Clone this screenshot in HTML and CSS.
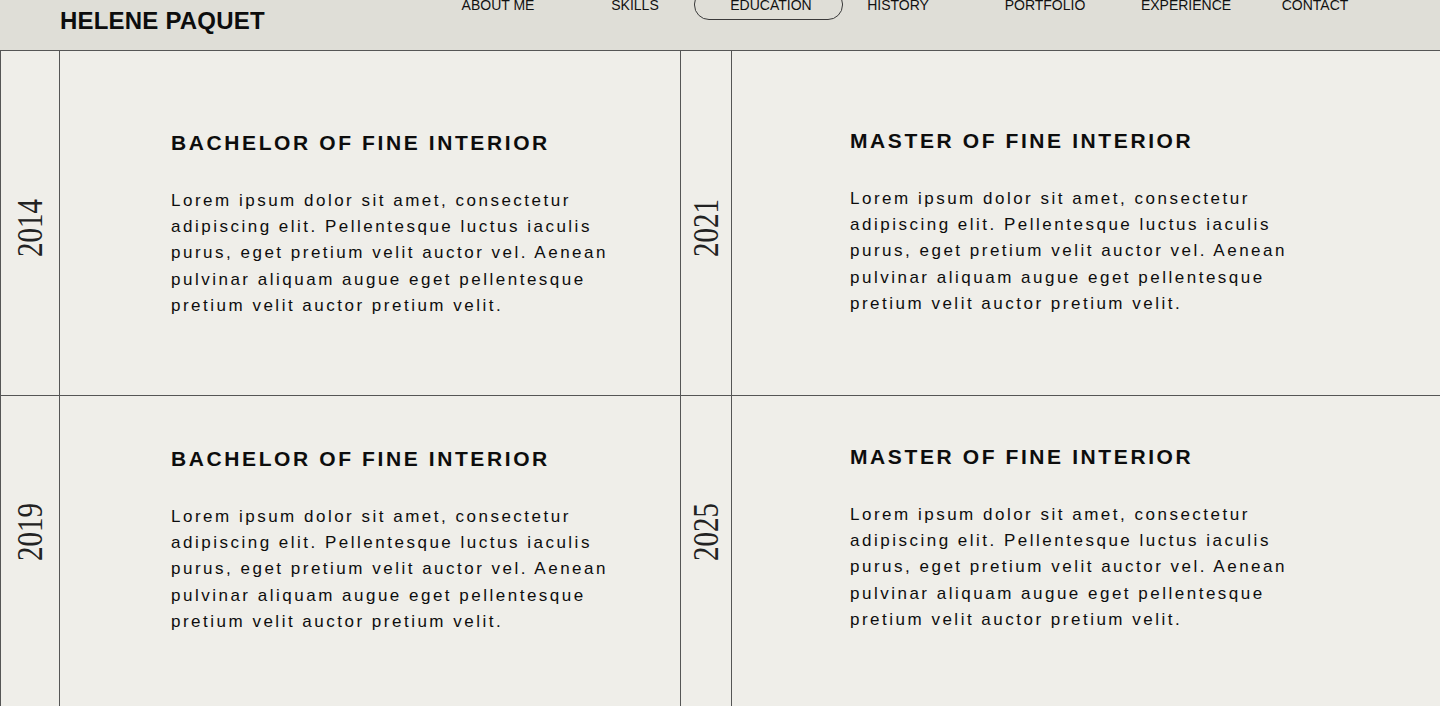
FILE: index.html
```html
<!DOCTYPE html>
<html lang="en">
<head>
<meta charset="utf-8">
<title>Helene Paquet — Education</title>
<link rel="stylesheet" href="styles.css">
</head>
<body>
<header class="topbar">
  <div class="brand">HELENE PAQUET</div>
  <nav class="nav">
    <a class="nav-item nav-item--about" href="#">ABOUT ME</a>
    <a class="nav-item nav-item--skills" href="#">SKILLS</a>
    <a class="nav-item nav-item--education is-active" href="#">EDUCATION</a>
    <a class="nav-item nav-item--history" href="#">HISTORY</a>
    <a class="nav-item nav-item--portfolio" href="#">PORTFOLIO</a>
    <a class="nav-item nav-item--experience" href="#">EXPERIENCE</a>
    <a class="nav-item nav-item--contact" href="#">CONTACT</a>
  </nav>
</header>
<main class="timeline">
  <div class="year year--top"><span class="year-text">2014</span></div>
  <section class="entry entry--top">
    <h2 class="entry-title">BACHELOR OF FINE INTERIOR</h2>
    <p class="entry-text">Lorem ipsum dolor sit amet, consectetur adipiscing elit. Pellentesque luctus iaculis purus, eget pretium velit auctor vel. Aenean pulvinar aliquam augue eget pellentesque pretium velit auctor pretium velit.</p>
  </section>
  <div class="year year--top"><span class="year-text">2021</span></div>
  <section class="entry entry--top entry--right">
    <h2 class="entry-title">MASTER OF FINE INTERIOR</h2>
    <p class="entry-text">Lorem ipsum dolor sit amet, consectetur adipiscing elit. Pellentesque luctus iaculis purus, eget pretium velit auctor vel. Aenean pulvinar aliquam augue eget pellentesque pretium velit auctor pretium velit.</p>
  </section>

  <div class="year year--bottom"><span class="year-text">2019</span></div>
  <section class="entry entry--bottom">
    <h2 class="entry-title">BACHELOR OF FINE INTERIOR</h2>
    <p class="entry-text">Lorem ipsum dolor sit amet, consectetur adipiscing elit. Pellentesque luctus iaculis purus, eget pretium velit auctor vel. Aenean pulvinar aliquam augue eget pellentesque pretium velit auctor pretium velit.</p>
  </section>
  <div class="year year--bottom"><span class="year-text">2025</span></div>
  <section class="entry entry--bottom entry--right">
    <h2 class="entry-title">MASTER OF FINE INTERIOR</h2>
    <p class="entry-text">Lorem ipsum dolor sit amet, consectetur adipiscing elit. Pellentesque luctus iaculis purus, eget pretium velit auctor vel. Aenean pulvinar aliquam augue eget pellentesque pretium velit auctor pretium velit.</p>
  </section>
</main>
</body>
</html>
```
FILE: styles.css
```css
* { box-sizing: border-box; }

html, body {
  margin: 0;
  padding: 0;
}

body {
  width: 1440px;
  height: 706px;
  overflow: hidden;
  background: #efeee9;
  color: #111;
  font-family: "Liberation Sans", Arial, sans-serif;
}

/* ---------- header ---------- */
.topbar {
  height: 51px;
  display: flex;
  align-items: flex-start;
  background: #dfded7;
  border-bottom: 1px solid #555;
}

.brand {
  margin: 7px 0 0 60px;
  font-size: 24px;
  line-height: 28px;
  font-weight: 700;
  letter-spacing: 0.2px;
  color: #0d0d0d;
  white-space: nowrap;
}

.nav {
  display: flex;
  align-items: flex-start;
  margin: -11px 45px 0 auto;
}

.nav-item {
  display: block;
  flex: none;
  padding-top: 8px;
  font-size: 14px;
  line-height: 16px;
  color: #111;
  text-decoration: none;
  text-align: center;
  white-space: nowrap;
}

.nav-item--about { width: 136px; }
.nav-item--skills { width: 118px; margin-left: 10px; }
.nav-item--education { width: 149px; }
.nav-item--history { width: 110px; }
.nav-item--portfolio { width: 184px; }
.nav-item--experience { width: 98px; }
.nav-item--contact { width: 160px; }

.nav-item.is-active {
  height: 31px;
  padding-top: 7px;
  padding-left: 5px;
  border: 1px solid #3a3a3a;
  border-radius: 15px;
}

/* ---------- timeline grid ---------- */
.timeline {
  display: grid;
  grid-template-columns: 58px 620px 50px 1fr;
  grid-template-rows: 344px 344px;
  gap: 1px;
  padding-left: 1px;
  background: #555;
}

.year {
  display: flex;
  justify-content: center;
  align-items: flex-start;
  background: #efeee9;
}

.year--top { padding-top: 148px; }
.year--bottom { padding-top: 107px; }

.year-text {
  writing-mode: vertical-rl;
  transform: rotate(180deg) scaleX(1.25);
  font-family: "Liberation Serif", "Times New Roman", serif;
  font-size: 29px;
  line-height: 29px;
  font-weight: 400;
  color: #222;
}

.entry {
  background: #efeee9;
  padding-left: 111px;
}

.entry--top { padding-top: 80px; }
.entry--bottom { padding-top: 51px; }

.entry--right { padding-left: 118px; }
.entry--right .entry-title { margin-top: -2px; }

.entry-title {
  margin: 0;
  font-size: 21px;
  line-height: 24px;
  font-weight: 700;
  letter-spacing: 2.6px;
  color: #0d0d0d;
}

.entry-text {
  width: 450px;
  margin: 33px 0 0;
  font-size: 17px;
  line-height: 26.2px;
  letter-spacing: 2.5px;
  color: #0d0d0d;
}
```
